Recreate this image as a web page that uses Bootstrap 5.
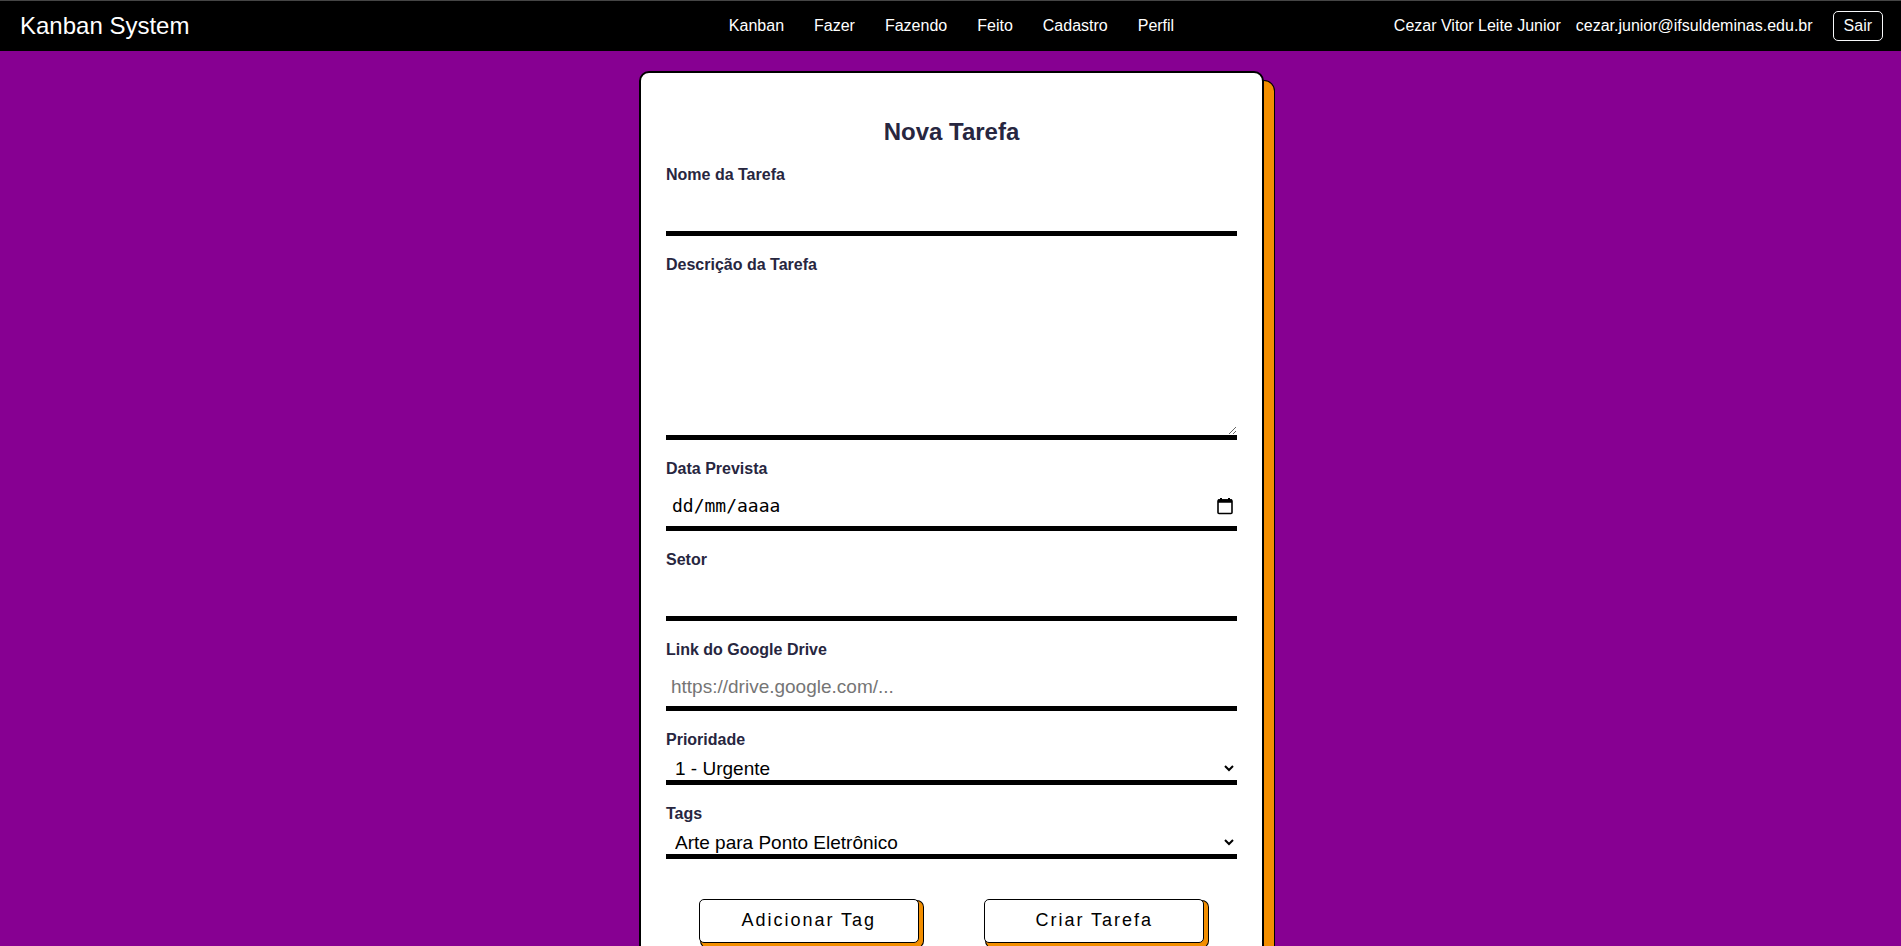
<!DOCTYPE html>
<html lang="pt-BR">
<head>
<meta charset="utf-8">
<meta name="viewport" content="width=device-width, initial-scale=1">
<title>Kanban System</title>
<link href="https://cdn.jsdelivr.net/npm/bootstrap@5.3.0/dist/css/bootstrap.min.css" rel="stylesheet">
<style>
body { font-family: "Liberation Sans", Arial, sans-serif; background: #870092; color: #000; }
.topbar { background: #000; border-top: 1px solid #454545; padding: 10px 18px 10px 20px; }
.topbar a, .topbar span { color: #fff; text-decoration: none; white-space: nowrap; }
.topbar .site-name { font-size: 24px; line-height: 30px; }
.side { flex: 1 1 0; }
.menu { gap: 30px; }
.account { gap: 15px; }
.exit { --bs-btn-border-radius: 5px; padding: 2px 10px; line-height: 24px; margin-left: 5px; }
main { padding-left: 2px; }
.task-card {
  max-width: 625px; margin: 20px auto 40px; padding: 44px 25px 40px;
  background: #fff; border: 2px solid #000; border-radius: 10px;
  box-shadow: 10px 10px 0 0 #f28e00, 10px 10px 0 1px #000;
}
.task-card h1 { font-size: 24px; line-height: 30px; font-weight: 700; color: #272640; margin-bottom: 15px; }
.field { margin-bottom: 16px; }
.field label { display: block; height: 24px; line-height: 26px; font-weight: 700; color: #272640; }
.line { display: block; width: 100%; height: 50px; padding: 6px 5px 0; border: 0; border-bottom: 5px solid #000; background: #fff; color: #000; font-size: 19px; outline: 0; }
.line::placeholder { color: #757575; opacity: 1; }
textarea.line { height: 164px; }
select.line { height: 34px; }
.date-line { height: 51px; padding: 4px 1px 0 6px; }
.date-line input { border: 0; padding: 0; outline: 0; font-family: "DejaVu Sans Mono", monospace; font-size: 18px; }
.date-line input::placeholder { color: #000; opacity: 1; }
.date-line button { border: 0; background: none; padding: 0 3px; line-height: 1; }
.actions { margin-top: 40px; row-gap: 16px; }
.action {
  width: 220px; height: 44px; padding: 0 6px 2px; background: #fff; color: #000; border: 1px solid #000; border-radius: 5px;
  font-size: 18px; letter-spacing: 2px; box-shadow: 3px 3px 0 1px #f28e00, 3px 3px 0 2px #000;
}
</style>
</head>
<body>
<header class="topbar d-flex align-items-center">
  <div class="side"><a class="site-name d-block" href="#">Kanban System</a></div>
  <nav class="menu d-flex">
    <a href="#">Kanban</a><a href="#">Fazer</a><a href="#">Fazendo</a><a href="#">Feito</a><a href="#">Cadastro</a><a href="#">Perfil</a>
  </nav>
  <div class="side account d-flex justify-content-end align-items-center">
    <span>Cezar Vitor Leite Junior</span>
    <span>cezar.junior@ifsuldeminas.edu.br</span>
    <button type="button" class="btn btn-outline-light exit">Sair</button>
  </div>
</header>
<main>
  <form class="task-card">
    <h1 class="text-center">Nova Tarefa</h1>
    <div class="field"><label for="nome">Nome da Tarefa</label><input class="line" id="nome" type="text"></div>
    <div class="field"><label for="descricao">Descrição da Tarefa</label><textarea class="line" id="descricao"></textarea></div>
    <div class="field">
      <label for="data">Data Prevista</label>
      <div class="line date-line d-flex align-items-center">
        <input class="flex-grow-1" id="data" type="text" placeholder="dd/mm/aaaa">
        <button type="button" aria-label="Abrir calendário"><svg width="16" height="18" viewBox="0 0 16 18" fill="none" stroke="#000"><rect x="1" y="3" width="14" height="13.500" rx="1" stroke-width="1.600"/><path d="M1 4h14" stroke-width="3.500"/><path d="M4 1v3M12 1v3" stroke-width="2"/></svg></button>
      </div>
    </div>
    <div class="field"><label for="setor">Setor</label><input class="line" id="setor" type="text"></div>
    <div class="field"><label for="link">Link do Google Drive</label><input class="line" id="link" type="url" placeholder="https://drive.google.com/..."></div>
    <div class="field"><label for="prioridade">Prioridade</label><select class="line" id="prioridade"><option>1 - Urgente</option></select></div>
    <div class="field"><label for="tags">Tags</label><select class="line" id="tags"><option>Arte para Ponto Eletrônico</option></select></div>
    <div class="actions d-flex flex-wrap justify-content-around">
      <button type="button" class="action">Adicionar Tag</button>
      <button type="submit" class="action">Criar Tarefa</button>
    </div>
  </form>
</main>
<script src="https://cdn.jsdelivr.net/npm/bootstrap@5.3.0/dist/js/bootstrap.bundle.min.js"></script>
</body>
</html>
